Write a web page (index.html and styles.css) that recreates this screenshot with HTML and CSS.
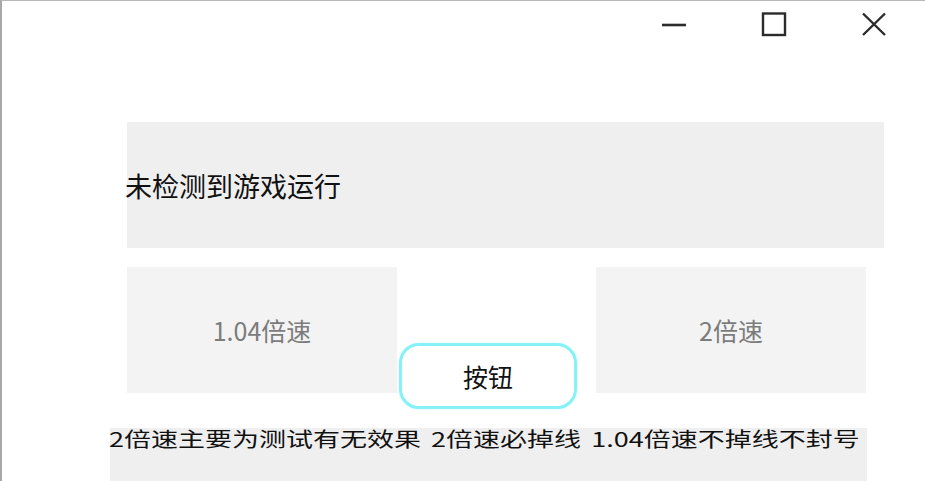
FILE: index.html
```
<!DOCTYPE html>
<html>
	<head>
		<meta charset="UTF-8">
		<title>加速器</title>
		<link rel="stylesheet" href="styles.css">
	</head>
	<body>
		<div class="window">
			<div class="titlebar">
				<span class="ctrl">
					<svg width="26" height="26" viewBox="0 0 26 26"><line x1="1" y1="13" x2="25" y2="13" stroke="#2b2b2b" stroke-width="2.6"/></svg>
				</span>
				<span class="ctrl">
					<svg width="26" height="26" viewBox="0 0 26 26"><rect x="2" y="1.5" width="22" height="21.5" fill="none" stroke="#2b2b2b" stroke-width="2.4"/></svg>
				</span>
				<span class="ctrl">
					<svg width="26" height="26" viewBox="0 0 26 26"><path d="M2 1.5 L24 23 M24 1.5 L2 23" stroke="#2b2b2b" stroke-width="2.4"/></svg>
				</span>
			</div>
			<div class="status"><span>未检测到游戏运行</span></div>
			<div class="speeds">
				<div class="speed">1.04倍速</div>
				<div class="middle">
					<div class="btn">按钮</div>
				</div>
				<div class="speed">2倍速</div>
			</div>
			<div class="notes">
				<span>2倍速主要为测试有无效果 2倍速必掉线 1.04倍速不掉线不封号</span>
			</div>
		</div>
	</body>
</html>
```
FILE: styles.css
```
body{
	margin: 0;
	background: #fff;
	font-family: "Noto Sans CJK SC", "Noto Sans", sans-serif;
	color: #1a1a1a;
}
.window{
	width: 925px;
	height: 481px;
	box-sizing: border-box;
	border-top: 1px solid #b9b9b9;
	border-left: 2px solid #a8a8a8;
	display: flex;
	flex-direction: column;
	overflow: hidden;
}
.titlebar{
	height: 48px;
	display: flex;
	justify-content: flex-end;
	align-items: center;
	padding-right: 38px;
	gap: 74px;
}
.ctrl{
	width: 26px;
	height: 26px;
	display: block;
}
.ctrl svg{
	display: block;
}
.status{
	margin: 73px 0 0 125px;
	width: 757px;
	height: 126px;
	flex: none;
	background: #efefef;
	display: flex;
	align-items: center;
	font-size: 27px;
	color: #111;
}
.status span{
	margin-left: -2px;
}
.speeds{
	margin: 19px 0 0 125px;
	height: 126px;
	flex: none;
	display: flex;
}
.speed{
	width: 270px;
	background: #f3f3f3;
	color: #7c7c7c;
	font-size: 25px;
	display: flex;
	align-items: center;
	justify-content: center;
}
.middle{
	width: 199px;
}
.btn{
	margin: 76px 0 0 2px;
	width: 178px;
	height: 66px;
	box-sizing: border-box;
	border: 3px solid #86f1f6;
	border-radius: 20px;
	box-shadow: 0 0 2px #c4fafc;
	background: #fff;
	font-size: 25px;
	display: flex;
	align-items: center;
	justify-content: center;
	color: #111;
}
.notes{
	margin: 35px 0 0 108px;
	width: 757px;
	flex: 1;
	background: #efefef;
	line-height: 24px;
}
.notes span{
	display: inline-block;
	margin: -4px 0 0 -1px;
	font-size: 20px;
	color: #111;
	white-space: nowrap;
	word-spacing: 3px;
	transform: scaleX(1.35);
	transform-origin: left;
}
```
